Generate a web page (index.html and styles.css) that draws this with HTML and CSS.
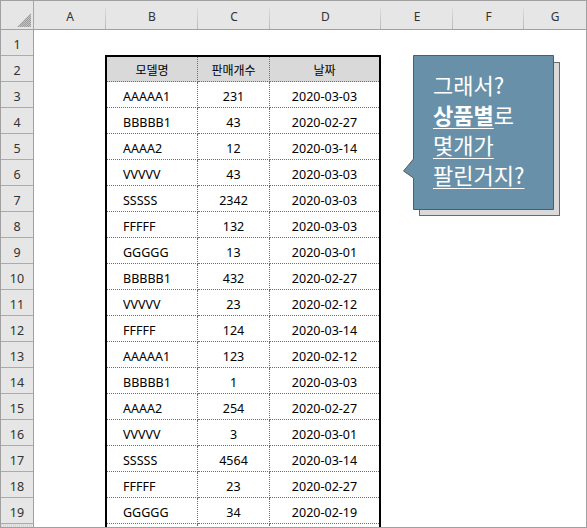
FILE: index.html
```html
<!DOCTYPE html>
<html lang="ko">
<head>
<meta charset="utf-8">
<title>Sheet</title>
<link rel="stylesheet" href="styles.css">
</head>
<body>
<div class="window">
  <div class="colheads">
    <div class="corner">
      <svg class="corner-tri" width="14" height="14" viewBox="0 0 14 14">
        <defs>
          <pattern id="chk" width="2" height="2" patternUnits="userSpaceOnUse">
            <rect width="2" height="2" fill="#c4c4c4"/>
            <rect width="1" height="1" fill="#9a9a9a"/>
            <rect x="1" y="1" width="1" height="1" fill="#9a9a9a"/>
          </pattern>
        </defs>
        <polygon points="14,0 14,14 0,14" fill="url(#chk)"/>
      </svg>
    </div>
    <div class="ch">A</div>
    <div class="ch">B</div>
    <div class="ch">C</div>
    <div class="ch">D</div>
    <div class="ch">E</div>
    <div class="ch">F</div>
    <div class="ch last">G</div>
  </div>
  <div class="sheet">
    <div class="rowheads">
      <div class="rh">1</div><div class="rh">2</div><div class="rh">3</div><div class="rh">4</div>
      <div class="rh">5</div><div class="rh">6</div><div class="rh">7</div><div class="rh">8</div>
      <div class="rh">9</div><div class="rh">10</div><div class="rh">11</div><div class="rh">12</div>
      <div class="rh">13</div><div class="rh">14</div><div class="rh">15</div><div class="rh">16</div>
      <div class="rh">17</div><div class="rh">18</div><div class="rh">19</div><div class="rh rh-blank"></div>
    </div>
    <div class="canvas">
      <div class="dtable">
        <div class="row head"><div class="c b">모델명</div><div class="c m">판매개수</div><div class="c d">날짜</div></div>
        <div class="row"><div class="c b">AAAAA1</div><div class="c m">231</div><div class="c d">2020-03-03</div></div>
        <div class="row"><div class="c b">BBBBB1</div><div class="c m">43</div><div class="c d">2020-02-27</div></div>
        <div class="row"><div class="c b">AAAA2</div><div class="c m">12</div><div class="c d">2020-03-14</div></div>
        <div class="row"><div class="c b">VVVVV</div><div class="c m">43</div><div class="c d">2020-03-03</div></div>
        <div class="row"><div class="c b">SSSSS</div><div class="c m">2342</div><div class="c d">2020-03-03</div></div>
        <div class="row"><div class="c b">FFFFF</div><div class="c m">132</div><div class="c d">2020-03-03</div></div>
        <div class="row"><div class="c b">GGGGG</div><div class="c m">13</div><div class="c d">2020-03-01</div></div>
        <div class="row"><div class="c b">BBBBB1</div><div class="c m">432</div><div class="c d">2020-02-27</div></div>
        <div class="row"><div class="c b">VVVVV</div><div class="c m">23</div><div class="c d">2020-02-12</div></div>
        <div class="row"><div class="c b">FFFFF</div><div class="c m">124</div><div class="c d">2020-03-14</div></div>
        <div class="row"><div class="c b">AAAAA1</div><div class="c m">123</div><div class="c d">2020-02-12</div></div>
        <div class="row"><div class="c b">BBBBB1</div><div class="c m">1</div><div class="c d">2020-03-03</div></div>
        <div class="row"><div class="c b">AAAA2</div><div class="c m">254</div><div class="c d">2020-02-27</div></div>
        <div class="row"><div class="c b">VVVVV</div><div class="c m">3</div><div class="c d">2020-03-01</div></div>
        <div class="row"><div class="c b">SSSSS</div><div class="c m">4564</div><div class="c d">2020-03-14</div></div>
        <div class="row"><div class="c b">FFFFF</div><div class="c m">23</div><div class="c d">2020-02-27</div></div>
        <div class="row"><div class="c b">GGGGG</div><div class="c m">34</div><div class="c d">2020-02-19</div></div>
        <div class="row"><div class="c b"></div><div class="c m"></div><div class="c d"></div></div>
      </div>
    </div>
  </div>
  <svg class="callout-shape" width="165" height="170" viewBox="0 0 165 170">
    <rect x="19.5" y="12.5" width="140" height="153" fill="#dadada" stroke="#6a6a6a" stroke-width="1"/>
    <polygon points="13.5,5.5 153.5,5.5 153.5,159.5 13.5,159.5 13.5,128 3.5,121 13.5,109" fill="#6891a9" stroke="#5a5a5a" stroke-width="1"/>
  </svg>
  <div class="callout-text">
    <div>그래서?</div>
    <div><span class="u strong">상품별</span>로</div>
    <div><span class="u">몇개가</span></div>
    <div><span class="u">팔린거지?</span></div>
  </div>
</div>
</body>
</html>
```
FILE: styles.css
```css
html, body {
  margin: 0;
  padding: 0;
  background: #fff;
}

.window {
  position: relative;
  width: 587px;
  height: 528px;
  box-sizing: border-box;
  border: 1px solid #a0a0a0;
  overflow: hidden;
  background: #fff;
  font-family: "Noto Sans", "Noto Sans CJK KR", sans-serif;
  font-size: 12.5px;
  color: #000;
}

.colheads {
  display: grid;
  grid-template-columns: 33px 72px 92px 72px 111px 72px 71px 1fr;
  height: 29px;
  box-sizing: border-box;
  border-bottom: 1px solid #a0a0a0;
  background: #e6e6e6;
}

.corner {
  position: relative;
  border-right: 1px solid #a6a6a6;
}

.corner-tri {
  position: absolute;
  left: 16px;
  top: 12px;
}

.ch {
  position: relative;
  display: flex;
  align-items: center;
  justify-content: center;
  color: #333;
  font-size: 12px;
  padding-top: 2px;
}

.ch::after {
  content: "";
  position: absolute;
  right: 0;
  top: 7px;
  bottom: 0;
  width: 1px;
  background: linear-gradient(#dcdcdc, #b8b8b8);
}

.ch.last::after {
  display: none;
}

.sheet {
  display: flex;
}

.rowheads {
  width: 33px;
  flex: none;
  box-sizing: border-box;
  border-right: 1px solid #a0a0a0;
  background: #e6e6e6;
}

.rh {
  height: 26px;
  box-sizing: border-box;
  border-bottom: 1px solid #ababab;
  display: flex;
  align-items: center;
  justify-content: center;
  padding-top: 3px;
  color: #333;
  font-size: 12.5px;
}

.rh-blank {
  background: repeating-linear-gradient(90deg, #d8d8d8 0 1px, #e6e6e6 1px 2px);
}

.canvas {
  flex: 1;
  padding-left: 71px;
  padding-top: 25px;
}

.dtable {
  width: 276px;
  box-sizing: border-box;
  border: 2px solid #000;
  border-bottom: none;
}

.row {
  display: grid;
  grid-template-columns: 91px 72px 109px;
  height: 26px;
}

.row.head {
  height: 25px;
  background: #d9d9d9;
}

.c {
  box-sizing: border-box;
  border-bottom: 1px dotted #6f6f6f;
  display: flex;
  align-items: center;
  justify-content: center;
  padding-top: 3px;
  white-space: nowrap;
}

.c.b,
.c.m {
  border-right: 1px dotted #6f6f6f;
}

.row .c.b {
  justify-content: flex-start;
  padding-left: 16px;
}

.row.head .c {
  font-size: 12px;
  padding-top: 2px;
}

.row.head .c.b {
  justify-content: center;
  padding-left: 0;
}

.callout-shape {
  position: absolute;
  left: 399px;
  top: 49px;
}

.callout-text {
  position: absolute;
  left: 432px;
  top: 68px;
  font-family: "Noto Sans CJK KR", sans-serif;
  font-size: 22px;
  line-height: 30px;
  color: #fff;
  white-space: nowrap;
}

.u {
  text-decoration: underline;
  text-decoration-thickness: 1px;
  text-underline-offset: 4px;
}

.strong {
  font-weight: 700;
}
```
